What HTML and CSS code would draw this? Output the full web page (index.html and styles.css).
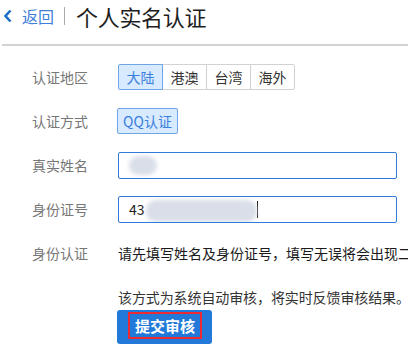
FILE: index.html
```html
<!DOCTYPE html>
<html>
<head>
<title>个人实名认证</title>
<link rel="stylesheet" href="styles.css">
</head>

<body>

<div class="header">
<a class="back" href="#">
<svg class="backIcon" width="10" height="14" viewBox="0 0 10 14">
<path d="M7.5 1.5 L2.5 7 L7.5 12.5" fill="none" stroke="#1b6fc6" stroke-width="2.6"/>
</svg>
<span>返回</span>
</a>
<span class="sep"></span>
<h1 class="title">个人实名认证</h1>
</div>

<div class="form">

<div class="row">
<div class="label">认证地区</div>
<div class="segments">
<span class="seg active">大陆</span>
<span class="seg">港澳</span>
<span class="seg">台湾</span>
<span class="seg">海外</span>
</div>
</div>

<div class="row">
<div class="label">认证方式</div>
<span class="seg single active">QQ认证</span>
</div>

<div class="row">
<div class="label">真实姓名</div>
<div class="input">
<span class="blur blurName"></span>
</div>
</div>

<div class="row">
<div class="label">身份证号</div>
<div class="input">
<span class="idText">43</span>
<span class="blur blurId"></span>
<span class="caret"></span>
</div>
</div>

<div class="row">
<div class="label">身份认证</div>
<div class="hint">请先填写姓名及身份证号，填写无误将会出现二维码</div>
</div>

<div class="note">该方式为系统自动审核，将实时反馈审核结果。</div>

<div class="submitRow">
<a class="submit" href="#"><span class="submitText">提交审核</span></a>
</div>

</div>

</body>
</html>
```

FILE: styles.css
```css
body {
    margin: 0;
    font-family: "Noto Sans CJK SC", "Noto Sans", sans-serif;
    background: #fff;
    overflow: hidden;
}
.header {
    display: flex;
    align-items: center;
    height: 29px;
    padding: 1px 0 14px 2px;
    margin-left: 2px;
    border-bottom: 2px solid #d3d3d3;
}
.back {
    display: flex;
    align-items: center;
    text-decoration: none;
    color: #3d7fd9;
    font-size: 16px;
}
.backIcon {
    margin-left: -1px;
    margin-right: 9px;
}
.sep {
    width: 1px;
    height: 18px;
    background: #aaa;
    margin: 0 11px 0 10px;
}
.title {
    margin: 0;
    font-size: 22px;
    font-weight: normal;
    color: #1e1e1e;
    letter-spacing: -0.3px;
}
.form {
    padding: 18px 0 0 32px;
    overflow: hidden;
}
.row {
    display: flex;
    align-items: center;
    height: 26px;
    margin-bottom: 18px;
}
.label {
    width: 86px;
    flex: none;
    font-size: 14px;
    color: #777;
}
.segments {
    display: flex;
}
.seg {
    display: inline-flex;
    align-items: center;
    justify-content: center;
    box-sizing: border-box;
    width: 45px;
    height: 26px;
    font-size: 14px;
    color: #333;
    border: 1px solid #d2d2d2;
    margin-left: -1px;
}
.seg:first-child {
    margin-left: 0;
    border-radius: 2px 0 0 2px;
}
.seg:last-child {
    border-radius: 0 2px 2px 0;
}
.seg.active {
    background: #d8eaff;
    border-color: #6fa5e4;
    color: #3a80da;
    position: relative;
}
.seg.single {
    width: 61px;
    border-radius: 2px;
}
.input {
    display: flex;
    align-items: center;
    box-sizing: border-box;
    width: 279px;
    height: 27px;
    border: 1px solid #2f7bd7;
    border-radius: 2px;
    padding-left: 10px;
    font-size: 14px;
    color: #222;
    overflow: hidden;
}
.blur {
    display: inline-block;
    background: #d9dee8;
    filter: blur(2px);
    border-radius: 10px;
}
.blurName {
    width: 28px;
    height: 19px;
}
.idText {
    margin-right: 1px;
}
.blurId {
    width: 111px;
    height: 22px;
    margin-top: 3px;
}
.caret {
    display: inline-block;
    width: 1px;
    height: 17px;
    background: #111;
}
.hint {
    flex: 1;
    min-width: 0;
    overflow: hidden;
    font-size: 14px;
    color: #1a1a1a;
    white-space: nowrap;
}
.note {
    margin: 2px 0 0 86px;
    font-size: 14px;
    color: #333;
    line-height: 26px;
    white-space: nowrap;
    letter-spacing: -0.1px;
}
.submitRow {
    padding-left: 85px;
}
.submit {
    display: inline-flex;
    box-sizing: border-box;
    width: 95px;
    height: 34px;
    background: #2279d9;
    border-radius: 3px;
    text-decoration: none;
    padding: 2px 0 0 11px;
}
.submitText {
    display: flex;
    align-items: center;
    justify-content: center;
    box-sizing: border-box;
    width: 74px;
    height: 27px;
    border: 2px solid #ec2a2f;
    font-size: 15px;
    font-weight: bold;
    color: #fff;
}
```
